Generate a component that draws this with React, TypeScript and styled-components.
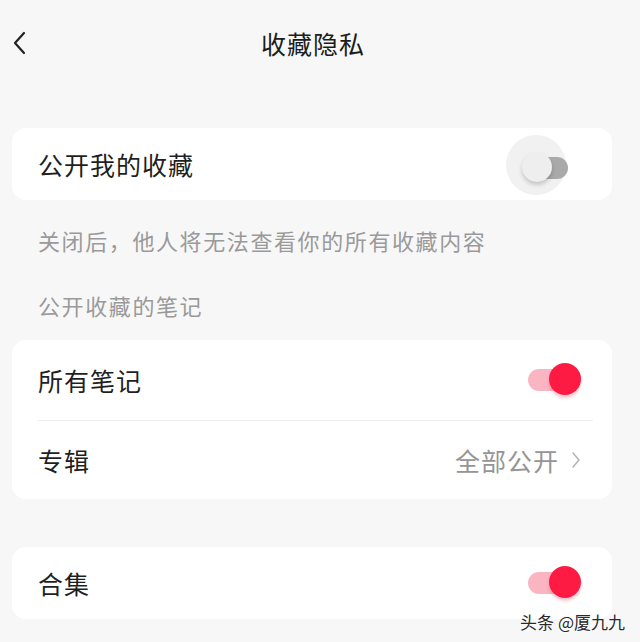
import React from "react";
import styled, { createGlobalStyle } from "styled-components";

const GlobalStyle = createGlobalStyle`
  html, body {
    margin: 0;
    padding: 0;
    background: #f7f7f7;
  }
  body {
    font-family: "Noto Sans CJK SC", "Noto Sans", sans-serif;
    -webkit-font-smoothing: antialiased;
  }
`;

const Page = styled.div`
  position: relative;
  width: 640px;
  height: 642px;
  overflow: hidden;
  background: #f7f7f7;
`;

const Header = styled.header`
  position: relative;
  height: 86px;
  display: flex;
  align-items: center;
  justify-content: center;
`;

const BackButton = styled.button`
  position: absolute;
  left: 8px;
  top: 28px;
  width: 24px;
  height: 30px;
  padding: 0;
  border: none;
  background: transparent;
  display: flex;
  align-items: center;
  justify-content: center;
`;

const Title = styled.h1`
  margin: 0;
  font-size: 25px;
  font-weight: 400;
  letter-spacing: 1px;
  color: #1c1c1c;
  padding-right: 14px;
`;

const Card = styled.section<{ $top: number }>`
  margin: ${(p) => p.$top}px 28px 0 12px;
  background: #ffffff;
  border-radius: 14px;
  overflow: hidden;
`;

const Row = styled.div<{ $h: number }>`
  height: ${(p) => p.$h}px;
  display: flex;
  align-items: center;
  justify-content: space-between;
  padding: 0 31px 0 26px;
`;

const Label = styled.span`
  font-size: 25px;
  letter-spacing: 1px;
  color: #1f1f1f;
`;

const Divider = styled.div`
  height: 1px;
  background: #eeeeee;
  margin: 0 19px 0 26px;
`;

const Hint = styled.p<{ $top: number }>`
  margin: ${(p) => p.$top}px 0 0 38px;
  font-size: 22px;
  letter-spacing: 1.6px;
  line-height: 30px;
  color: #9a9a9a;
`;

const Value = styled.span`
  display: flex;
  align-items: center;
  gap: 12px;
  font-size: 25px;
  letter-spacing: 1px;
  color: #959595;
`;

const SwitchBox = styled.span`
  position: relative;
  width: 53px;
  height: 32px;
  flex: none;
`;

const Halo = styled.span`
  position: absolute;
  left: -22px;
  top: -13px;
  width: 60px;
  height: 60px;
  border-radius: 50%;
  background: #f1f1f1;
`;

const Track = styled.span<{ $on: boolean }>`
  position: absolute;
  left: ${(p) => (p.$on ? 0 : -3)}px;
  width: ${(p) => (p.$on ? 42 : 43)}px;
  top: ${(p) => (p.$on ? 5 : 9)}px;
  height: 22px;
  border-radius: 11px;
  background: ${(p) => (p.$on ? "#f9b5c2" : "#a9a9a9")};
`;

const Knob = styled.span<{ $on: boolean }>`
  position: absolute;
  top: ${(p) => (p.$on ? -1 : 4)}px;
  left: ${(p) => (p.$on ? 21 : -6)}px;
  width: ${(p) => (p.$on ? 32 : 30)}px;
  height: ${(p) => (p.$on ? 32 : 30)}px;
  border-radius: 50%;
  background: ${(p) => (p.$on ? "#fe1b43" : "#eeeeee")};
  box-shadow: ${(p) =>
    p.$on
      ? "0 3px 3px rgba(200, 40, 70, 0.25)"
      : "0 3px 4px rgba(0, 0, 0, 0.18)"};
`;

const Watermark = styled.span`
  position: absolute;
  right: 15px;
  bottom: 8px;
  font-size: 17px;
  color: #2a2a2a;
  text-shadow: 0 0 2px #fff, 0 0 2px #fff, 0 0 3px #fff;
`;

const Switch = ({ on }: { on: boolean }) => (
  <SwitchBox>
    {!on && <Halo />}
    <Track $on={on} />
    <Knob $on={on} />
  </SwitchBox>
);

const Chevron = () => (
  <svg width="10" height="16" viewBox="0 0 10 16">
    <polyline
      points="2,1 8,8 2,15"
      fill="none"
      stroke="#b5b5b5"
      strokeWidth="1.6"
      strokeLinecap="round"
      strokeLinejoin="round"
    />
  </svg>
);

const App = () => {
  return (
    <Page>
      <GlobalStyle />
      <Header>
        <BackButton aria-label="返回">
          <svg width="14" height="24" viewBox="0 0 14 24">
            <polyline
              points="11,2 2,12 11,22"
              fill="none"
              stroke="#222"
              strokeWidth="2.2"
              strokeLinecap="round"
              strokeLinejoin="round"
            />
          </svg>
        </BackButton>
        <Title>收藏隐私</Title>
      </Header>

      <Card $top={42}>
        <Row $h={72}>
          <Label>公开我的收藏</Label>
          <Switch on={false} />
        </Row>
      </Card>

      <Hint $top={25}>关闭后，他人将无法查看你的所有收藏内容</Hint>
      <Hint $top={35}>公开收藏的笔记</Hint>

      <Card $top={20}>
        <Row $h={80}>
          <Label>所有笔记</Label>
          <Switch on />
        </Row>
        <Divider />
        <Row $h={78}>
          <Label>专辑</Label>
          <Value>
            全部公开
            <Chevron />
          </Value>
        </Row>
      </Card>

      <Card $top={48}>
        <Row $h={72}>
          <Label>合集</Label>
          <Switch on />
        </Row>
      </Card>

      <Watermark>头条 @厦九九</Watermark>
    </Page>
  );
};

export default App;
